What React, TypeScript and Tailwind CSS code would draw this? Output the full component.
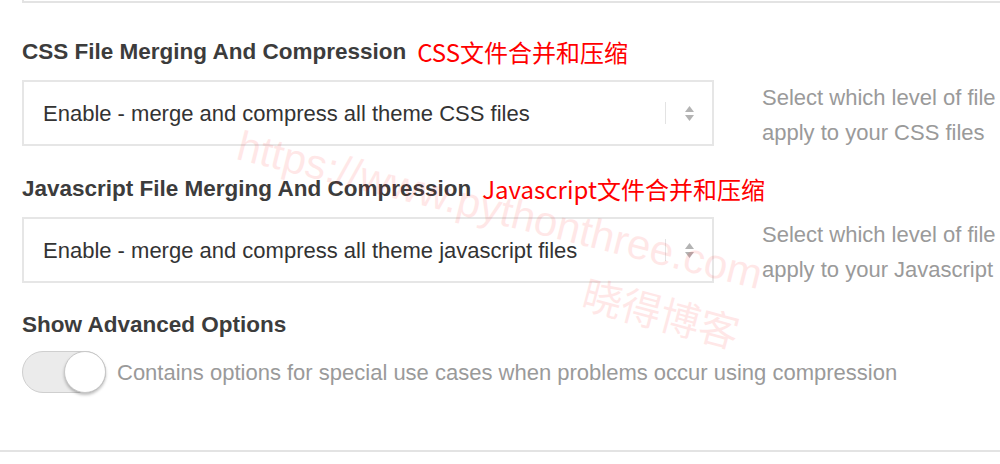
import React from "react";

const font = { fontFamily: '"Liberation Sans", "Noto Sans CJK SC", sans-serif' };
const cjk = { fontFamily: '"Noto Sans CJK SC", "Liberation Sans", sans-serif' };

function SelectBox({ value }: { value: string }) {
  return (
    <div className="flex h-[66px] w-[692px] shrink-0 items-center border-2 border-[#e6e6e6] bg-white pl-[19px]">
      <span className="flex-1 text-[22px] text-[#333]">{value}</span>
      <div className="h-[22px] w-px bg-[#e3e3e3]" />
      <div className="flex w-[46px] flex-col items-center justify-center gap-[3px]">
        <svg width="9" height="6" viewBox="0 0 9 6">
          <path d="M4.5 0 L9 6 L0 6 Z" fill="#b3b3b3" />
        </svg>
        <svg width="9" height="6" viewBox="0 0 9 6">
          <path d="M0 0 L9 0 L4.5 6 Z" fill="#b3b3b3" />
        </svg>
      </div>
    </div>
  );
}

function Field({
  title,
  note,
  value,
  help,
}: {
  title: string;
  note: string;
  value: string;
  help: string[];
}) {
  return (
    <div className="flex flex-col">
      <div className="flex h-[30px] items-center gap-[11px]">
        <h3 className="text-[22.5px] font-bold text-[#3c3c3c]">{title}</h3>
        <span className="text-[24px] text-[#ff0000]" style={cjk}>
          {note}
        </span>
      </div>
      <div className="mt-[13px] flex h-[66px] items-start gap-[48px]">
        <SelectBox value={value} />
        <div className="whitespace-nowrap text-[22px] leading-[35px] text-[#9a9a9a]">
          {help.map((h, i) => (
            <p key={i}>{h}</p>
          ))}
        </div>
      </div>
    </div>
  );
}

export default function App() {
  return (
    <div className="relative h-[464px] w-[1000px] overflow-hidden bg-white" style={font}>
      <div className="ml-[22px] h-[3px] border-b-2 border-l-2 border-[#e3e3e3]" />
      <div className="flex flex-col gap-[28px] pl-[22px] pt-[34px]">
        <Field
          title="CSS File Merging And Compression"
          note="CSS文件合并和压缩"
          value="Enable - merge and compress all theme CSS files"
          help={["Select which level of file", "apply to your CSS files"]}
        />
        <Field
          title="Javascript File Merging And Compression"
          note="Javascript文件合并和压缩"
          value="Enable - merge and compress all theme javascript files"
          help={["Select which level of file", "apply to your Javascript"]}
        />
      </div>
      <div className="mt-[27px] pl-[22px]">
        <h3 className="text-[22.5px] font-bold leading-[30px] text-[#3c3c3c]">Show Advanced Options</h3>
        <div className="mt-[11px] flex items-center gap-[11px]">
          <div className="relative h-[42px] w-[84px] shrink-0 rounded-full border border-[#cfcfcf] bg-[#ebebeb]">
            <div className="absolute right-[-1px] top-[-1px] h-[42px] w-[42px] rounded-full border border-[#c8c8c8] bg-white shadow-[0_2px_3px_rgba(0,0,0,0.25)]" />
          </div>
          <span className="whitespace-nowrap text-[22px] text-[#9a9a9a]">
            Contains options for special use cases when problems occur using compression
          </span>
        </div>
      </div>
      <div className="absolute bottom-[12px] left-0 h-[2px] w-full bg-[#e3e3e3]" />
      {/* watermark */}
      <div className="pointer-events-none absolute left-[246px] top-[114px] origin-top-left rotate-[14deg] whitespace-nowrap text-[42px] text-[#ff0000] opacity-[0.09]">
        https://www.pythonthree.com
      </div>
      <div
        className="pointer-events-none absolute left-[592px] top-[262px] origin-top-left rotate-[15deg] whitespace-nowrap text-[40px] text-[#ff0000] opacity-[0.09]"
        style={cjk}
      >
        晓得博客
      </div>
    </div>
  );
}
